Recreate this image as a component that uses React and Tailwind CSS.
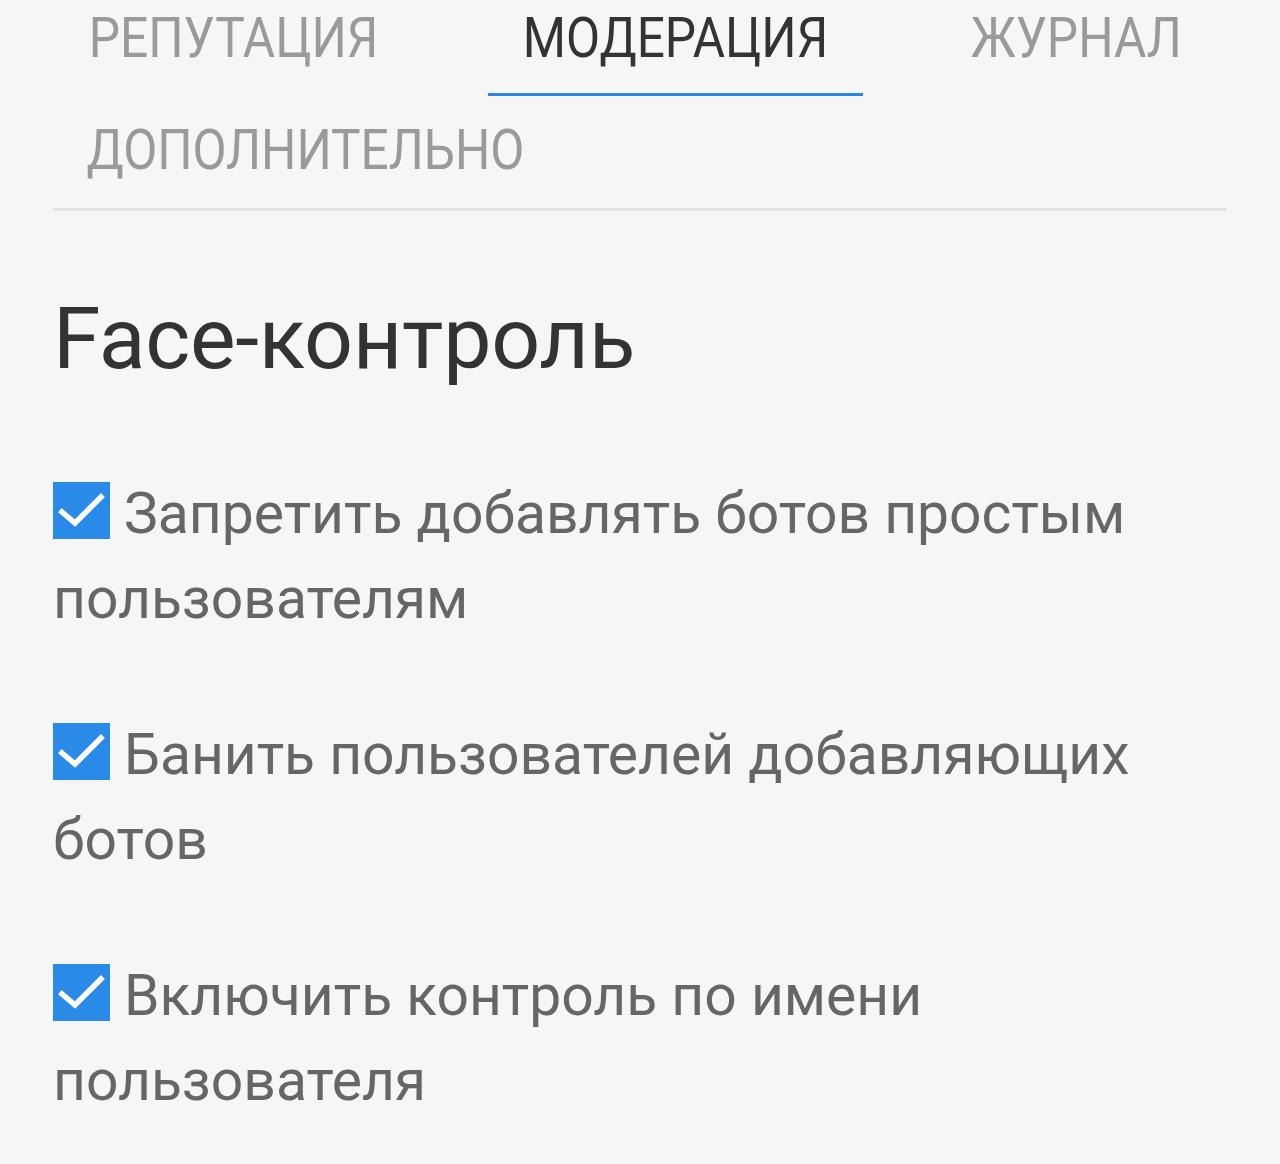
import React from 'react';

const TABS = [
  { label: 'РЕПУТАЦИЯ', width: 'w-[362px]' },
  { label: 'МОДЕРАЦИЯ', width: 'w-[375px]' },
  { label: 'ЖУРНАЛ', width: 'w-[280px]' },
  { label: 'ДОПОЛНИТЕЛЬНО', width: 'w-[505px]' },
];

const OPTIONS = [
  'Запретить добавлять ботов простым пользователям',
  'Банить пользователей добавляющих ботов',
  'Включить контроль по имени пользователя',
];

const Check = () => (
  <span className="inline-block w-[57px] h-[57px] bg-[#2a8ae8] align-[-6px] mr-[14px]">
    <svg viewBox="0 0 57 57" className="w-full h-full">
      <polyline points="9,30 22,41 48,15" fill="none" stroke="#fff" strokeWidth="5.5" strokeLinecap="square" />
    </svg>
  </span>
);

export default function App() {
  const active = 1;

  return (
    <div className="min-h-screen bg-[#f6f6f6] overflow-hidden" style={{ fontFamily: 'Roboto, "Noto Sans", sans-serif' }}>
      <div className="pl-[53px] pr-[54px]">
        {/* tabs */}
        <div className="-mt-[16px] flex flex-wrap gap-x-[73px] border-b-[3px] border-[#e3e3e3]">
          {TABS.map((tab, i) => (
            <div
              key={tab.label}
              className={`${tab.width} h-[112px] pt-[21px] flex justify-center text-[56px] leading-[66px] ${
                i === active ? 'text-[#333333] border-b-[3px] border-[#2a86e2]' : 'text-[#9a9a9a]'
              }`}
            >
              <span className="inline-block whitespace-nowrap scale-x-[0.885]">{tab.label}</span>
            </div>
          ))}
        </div>

        <h1 className="mt-[77px] text-[86px] leading-[102px] tracking-[-0.3px] text-[#333333]">Face-контроль</h1>

        <div className="mt-[81px] flex flex-col gap-[71px]">
          {OPTIONS.map(opt => (
            <label key={opt} className="block text-[57px] leading-[85px] text-[#666666] pr-[80px]">
              <Check />
              {opt}
            </label>
          ))}
        </div>
      </div>
    </div>
  );
}
